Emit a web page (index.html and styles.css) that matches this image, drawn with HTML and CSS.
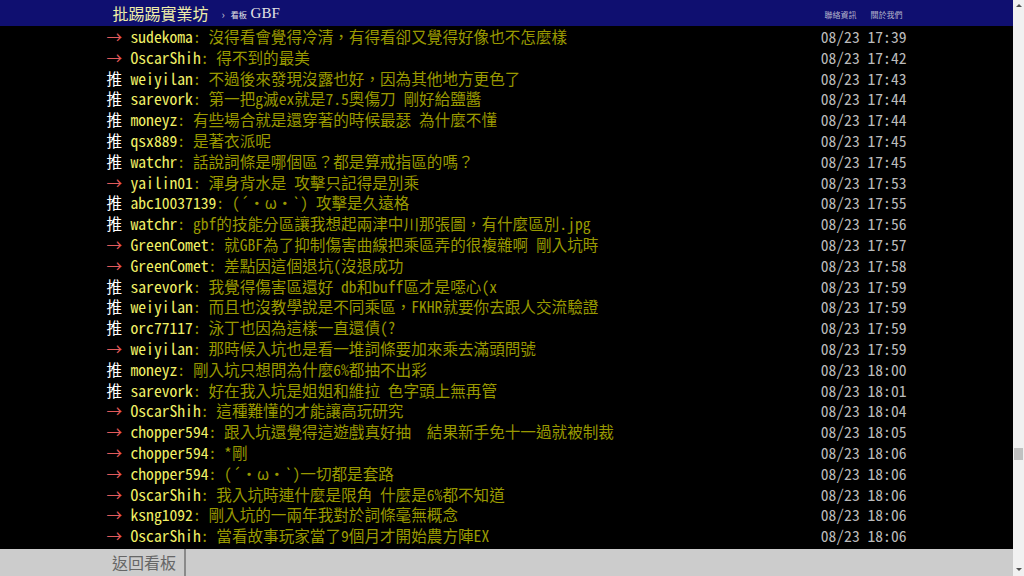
FILE: index.html
```html
<!DOCTYPE html>
<html lang="zh-Hant">
<head>
  <meta charset="UTF-8" />
  <title>GBF - 批踢踢實業坊</title>
  <link rel="stylesheet" href="styles.css">
</head>
<body>
  <div class="page">
    <div class="topbar-container">
      <div class="topbar">
        <a class="logo" href="#">批踢踢實業坊</a>
        <span class="crumb">›</span>
        <a class="board" href="#"><span class="board-label">看板</span> GBF</a>
        <a class="small right-first" href="#">聯絡資訊</a>
        <a class="small" href="#">關於我們</a>
      </div>
    </div>

    <div class="main-content">
      <div class="push-list">
        <div class="push"><span class="push-tag arrow">→</span><span class="push-userid">sudekoma</span><span class="push-content">: 沒得看會覺得冷清，有得看卻又覺得好像也不怎麼樣</span><span class="push-ipdatetime">08/23 17:39</span></div>
        <div class="push"><span class="push-tag arrow">→</span><span class="push-userid">OscarShih</span><span class="push-content">: 得不到的最美</span><span class="push-ipdatetime">08/23 17:42</span></div>
        <div class="push"><span class="push-tag">推</span><span class="push-userid">weiyilan</span><span class="push-content">: 不過後來發現沒露也好，因為其他地方更色了</span><span class="push-ipdatetime">08/23 17:43</span></div>
        <div class="push"><span class="push-tag">推</span><span class="push-userid">sarevork</span><span class="push-content">: 第一把g滅ex就是7.5奧傷刀 剛好給鹽醬</span><span class="push-ipdatetime">08/23 17:44</span></div>
        <div class="push"><span class="push-tag">推</span><span class="push-userid">moneyz</span><span class="push-content">: 有些場合就是還穿著的時候最瑟 為什麼不懂</span><span class="push-ipdatetime">08/23 17:44</span></div>
        <div class="push"><span class="push-tag">推</span><span class="push-userid">qsx889</span><span class="push-content">: 是著衣派呢</span><span class="push-ipdatetime">08/23 17:45</span></div>
        <div class="push"><span class="push-tag">推</span><span class="push-userid">watchr</span><span class="push-content">: 話說詞條是哪個區？都是算戒指區的嗎？</span><span class="push-ipdatetime">08/23 17:45</span></div>
        <div class="push"><span class="push-tag arrow">→</span><span class="push-userid">yailin01</span><span class="push-content">: 渾身背水是 攻擊只記得是別乘</span><span class="push-ipdatetime">08/23 17:53</span></div>
        <div class="push"><span class="push-tag">推</span><span class="push-userid">abc10037139</span><span class="push-content">: (´・ω・`) 攻擊是久遠格</span><span class="push-ipdatetime">08/23 17:55</span></div>
        <div class="push"><span class="push-tag">推</span><span class="push-userid">watchr</span><span class="push-content">: gbf的技能分區讓我想起兩津中川那張圖，有什麼區別.jpg</span><span class="push-ipdatetime">08/23 17:56</span></div>
        <div class="push"><span class="push-tag arrow">→</span><span class="push-userid">GreenComet</span><span class="push-content">: 就GBF為了抑制傷害曲線把乘區弄的很複雜啊 剛入坑時</span><span class="push-ipdatetime">08/23 17:57</span></div>
        <div class="push"><span class="push-tag arrow">→</span><span class="push-userid">GreenComet</span><span class="push-content">: 差點因這個退坑(沒退成功</span><span class="push-ipdatetime">08/23 17:58</span></div>
        <div class="push"><span class="push-tag">推</span><span class="push-userid">sarevork</span><span class="push-content">: 我覺得傷害區還好 db和buff區才是噁心(x</span><span class="push-ipdatetime">08/23 17:59</span></div>
        <div class="push"><span class="push-tag">推</span><span class="push-userid">weiyilan</span><span class="push-content">: 而且也沒教學說是不同乘區，FKHR就要你去跟人交流驗證</span><span class="push-ipdatetime">08/23 17:59</span></div>
        <div class="push"><span class="push-tag">推</span><span class="push-userid">orc77117</span><span class="push-content">: 泳丁也因為這樣一直還債(?</span><span class="push-ipdatetime">08/23 17:59</span></div>
        <div class="push"><span class="push-tag arrow">→</span><span class="push-userid">weiyilan</span><span class="push-content">: 那時候入坑也是看一堆詞條要加來乘去滿頭問號</span><span class="push-ipdatetime">08/23 17:59</span></div>
        <div class="push"><span class="push-tag">推</span><span class="push-userid">moneyz</span><span class="push-content">: 剛入坑只想問為什麼6%都抽不出彩</span><span class="push-ipdatetime">08/23 18:00</span></div>
        <div class="push"><span class="push-tag">推</span><span class="push-userid">sarevork</span><span class="push-content">: 好在我入坑是姐姐和維拉 色字頭上無再管</span><span class="push-ipdatetime">08/23 18:01</span></div>
        <div class="push"><span class="push-tag arrow">→</span><span class="push-userid">OscarShih</span><span class="push-content">: 這種難懂的才能讓高玩研究</span><span class="push-ipdatetime">08/23 18:04</span></div>
        <div class="push"><span class="push-tag arrow">→</span><span class="push-userid">chopper594</span><span class="push-content">: 跟入坑還覺得這遊戲真好抽  結果新手免十一過就被制裁</span><span class="push-ipdatetime">08/23 18:05</span></div>
        <div class="push"><span class="push-tag arrow">→</span><span class="push-userid">chopper594</span><span class="push-content">: *剛</span><span class="push-ipdatetime">08/23 18:06</span></div>
        <div class="push"><span class="push-tag arrow">→</span><span class="push-userid">chopper594</span><span class="push-content">: (´・ω・`)一切都是套路</span><span class="push-ipdatetime">08/23 18:06</span></div>
        <div class="push"><span class="push-tag arrow">→</span><span class="push-userid">OscarShih</span><span class="push-content">: 我入坑時連什麼是限角 什麼是6%都不知道</span><span class="push-ipdatetime">08/23 18:06</span></div>
        <div class="push"><span class="push-tag arrow">→</span><span class="push-userid">ksng1092</span><span class="push-content">: 剛入坑的一兩年我對於詞條毫無概念</span><span class="push-ipdatetime">08/23 18:06</span></div>
        <div class="push"><span class="push-tag arrow">→</span><span class="push-userid">OscarShih</span><span class="push-content">: 當看故事玩家當了9個月才開始農方陣EX</span><span class="push-ipdatetime">08/23 18:06</span></div>
      </div>
    </div>

    <div class="footer">
      <a class="back-btn" href="#">返回看板</a>
    </div>
  </div>

  <!-- fake scrollbar, same as the screenshot -->
  <div class="scrollbar">
    <span class="sb-arrow up"></span>
    <span class="sb-thumb"></span>
    <span class="sb-arrow down"></span>
  </div>
</body>
</html>
```

FILE: styles.css
```css
body {
  margin: 0;
  background-color: #000;
  font-family: "Noto Sans Mono CJK TC", "Noto Sans CJK TC", "Liberation Mono", monospace;
  display: flex;
  height: 100vh;
  overflow: hidden;
}

a {
  text-decoration: none;
}

.page {
  flex: 1;
  display: flex;
  flex-direction: column;
  min-width: 0;
}

/* top bar */
.topbar-container {
  background-color: #0f0f70;
  height: 26px;
  flex-shrink: 0;
}

.topbar {
  width: 800px;
  height: 26px;
  margin: 0 auto;
  display: flex;
  align-items: center;
  font-family: "Noto Sans CJK TC", sans-serif;
}

.logo {
  margin-left: 6px;
  font-size: 16px;
  color: #eeeea8;
}

.crumb {
  color: #c8c8d8;
  font-size: 11px;
  margin: 2px 6px 0 13px;
}

.board {
  color: #e4e4e4;
  font-family: "Liberation Serif", serif;
  font-size: 15px;
}

.board-label {
  font-family: "Noto Sans CJK TC", sans-serif;
  font-size: 8px;
}

.small {
  font-size: 8px;
  color: #b4b4cc;
  margin-top: 2px;
}

.right-first {
  margin-left: auto;
  margin-right: 14px;
}

.topbar .small:last-child {
  margin-right: 4px;
}

/* pushes */
.main-content {
  flex: 1;
  overflow: hidden;
}

.push-list {
  width: 800px;
  margin: 0 auto;
}

.push {
  display: flex;
  height: 20.8px;
  line-height: 20.8px;
  font-size: 15.6px;
  white-space: pre;
}

.push-tag {
  width: 24px;
  color: #fff;
}

.push-tag.arrow {
  color: #e25a5a;
}

.push-userid {
  color: #f0f066;
}

.push-content {
  color: #990;
}

.push-ipdatetime {
  margin-left: auto;
  color: #bbb;
}

/* bottom bar */
.footer {
  height: 27px;
  flex-shrink: 0;
  background-color: #ccc;
  display: flex;
}

.back-btn {
  width: 186px;
  box-sizing: border-box;
  padding-right: 8px;
  text-align: right;
  line-height: 27px;
  font-family: "Noto Sans CJK TC", sans-serif;
  font-size: 16px;
  color: #666;
  border-right: 2px solid #8a8a8a;
}

/* scrollbar */
.scrollbar {
  width: 11px;
  flex-shrink: 0;
  background-color: #f1f1f1;
  display: flex;
  flex-direction: column;
  align-items: center;
}

.sb-arrow {
  width: 0;
  height: 0;
  border-left: 3px solid transparent;
  border-right: 3px solid transparent;
}

.sb-arrow.up {
  margin-top: 4px;
  border-bottom: 3px solid #505050;
}

.sb-thumb {
  width: 9px;
  height: 12px;
  margin-top: 441px;
  background-color: #c1c1c1;
}

.sb-arrow.down {
  margin-top: auto;
  margin-bottom: 5px;
  border-top: 3px solid #505050;
}
```
